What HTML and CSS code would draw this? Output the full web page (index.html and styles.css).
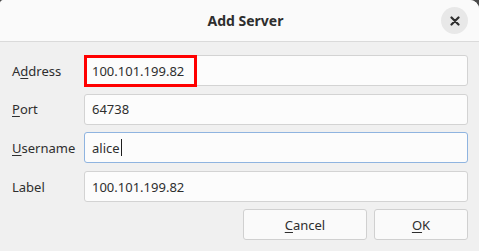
FILE: index.html
```html
<!DOCTYPE html>
<html lang="en">
<head>
<meta charset="utf-8">
<title>Add Server</title>
<link rel="stylesheet" href="styles.css">
</head>
<body>
<div class="dialog">
  <header class="titlebar">
    <div class="title">Add Server</div>
    <button class="close" aria-label="Close">
      <svg width="10" height="10" viewBox="0 0 10 10"><path d="M1.5 1.5 L8.5 8.5 M8.5 1.5 L1.5 8.5" stroke="#2e2e2e" stroke-width="2.2" stroke-linecap="round" fill="none"/></svg>
    </button>
  </header>
  <main class="content">
    <div class="form">
      <div class="label">A<u>d</u>dress</div>
      <div class="entry highlighted"><span class="text">100.101.199.82</span><span class="mark"></span></div>
      <div class="label"><u>P</u>ort</div>
      <div class="entry"><span class="text">64738</span></div>
      <div class="label"><u>U</u>sername</div>
      <div class="entry focused"><span class="text">alice</span><span class="caret"></span></div>
      <div class="label">Label</div>
      <div class="entry"><span class="text">100.101.199.82</span></div>
    </div>
    <div class="actions">
      <button class="btn cancel"><u>C</u>ancel</button>
      <button class="btn ok"><u>O</u>K</button>
    </div>
  </main>
</div>
</body>
</html>
```
FILE: styles.css
```css
html, body {
  margin: 0;
  padding: 0;
  background: #4a4a4a;
}
body {
  width: 479px;
  height: 251px;
  overflow: hidden;
  font-family: "Noto Sans", "DejaVu Sans", sans-serif;
  font-size: 13px;
  color: #2e2e2e;
}
.dialog {
  width: 479px;
  height: 251px;
  background: #f0f0f0;
  border-top-left-radius: 4px;
  border-top-right-radius: 9px;
  overflow: hidden;
  display: flex;
  flex-direction: column;
}
.titlebar {
  height: 41px;
  background: #fafafa;
  border-bottom: 1px solid #dadada;
  display: flex;
  align-items: center;
  padding: 0 11px 0 50px;
}
.title {
  flex: 1;
  text-align: center;
  font-weight: bold;
  font-size: 14px;
  color: #2e2e2e;
}
.close {
  width: 27px;
  height: 27px;
  border-radius: 50%;
  border: none;
  background: #e8e8e8;
  padding: 0;
  display: flex;
  align-items: center;
  justify-content: center;
}
.content {
  padding: 13px 11px 0 12px;
  display: flex;
  flex-direction: column;
  gap: 7px;
}
.form {
  display: grid;
  grid-template-columns: 72px 1fr;
  row-gap: 7.7px;
  align-items: center;
}
.label {
  line-height: 18px;
  color: #2e2e2e;
}
u {
  text-decoration-thickness: 1px;
  text-underline-offset: 2px;
}
.entry {
  position: relative;
  height: 31px;
  box-sizing: border-box;
  background: #fcfcfc;
  border: 1px solid #d3d3d3;
  border-radius: 3px;
  padding: 0 7px;
  display: flex;
  align-items: center;
}
.entry.focused {
  border-color: #8fb4e0;
}
.caret {
  display: inline-block;
  width: 1px;
  height: 17px;
  background: #1e1e1e;
  margin-left: 1px;
}
.mark {
  position: absolute;
  left: -1px;
  top: -1px;
  width: 113px;
  height: 32px;
  box-sizing: border-box;
  border: 3px solid #ff0000;
}
.actions {
  display: flex;
  justify-content: flex-end;
  gap: 7px;
}
.btn {
  height: 31px;
  box-sizing: border-box;
  border: 1px solid #d0d0d0;
  border-radius: 3px;
  background: #fafafa;
  font-family: inherit;
  font-size: 13px;
  color: #2e2e2e;
  padding: 0;
}
.cancel { width: 124px; }
.ok { width: 94px; }
```
